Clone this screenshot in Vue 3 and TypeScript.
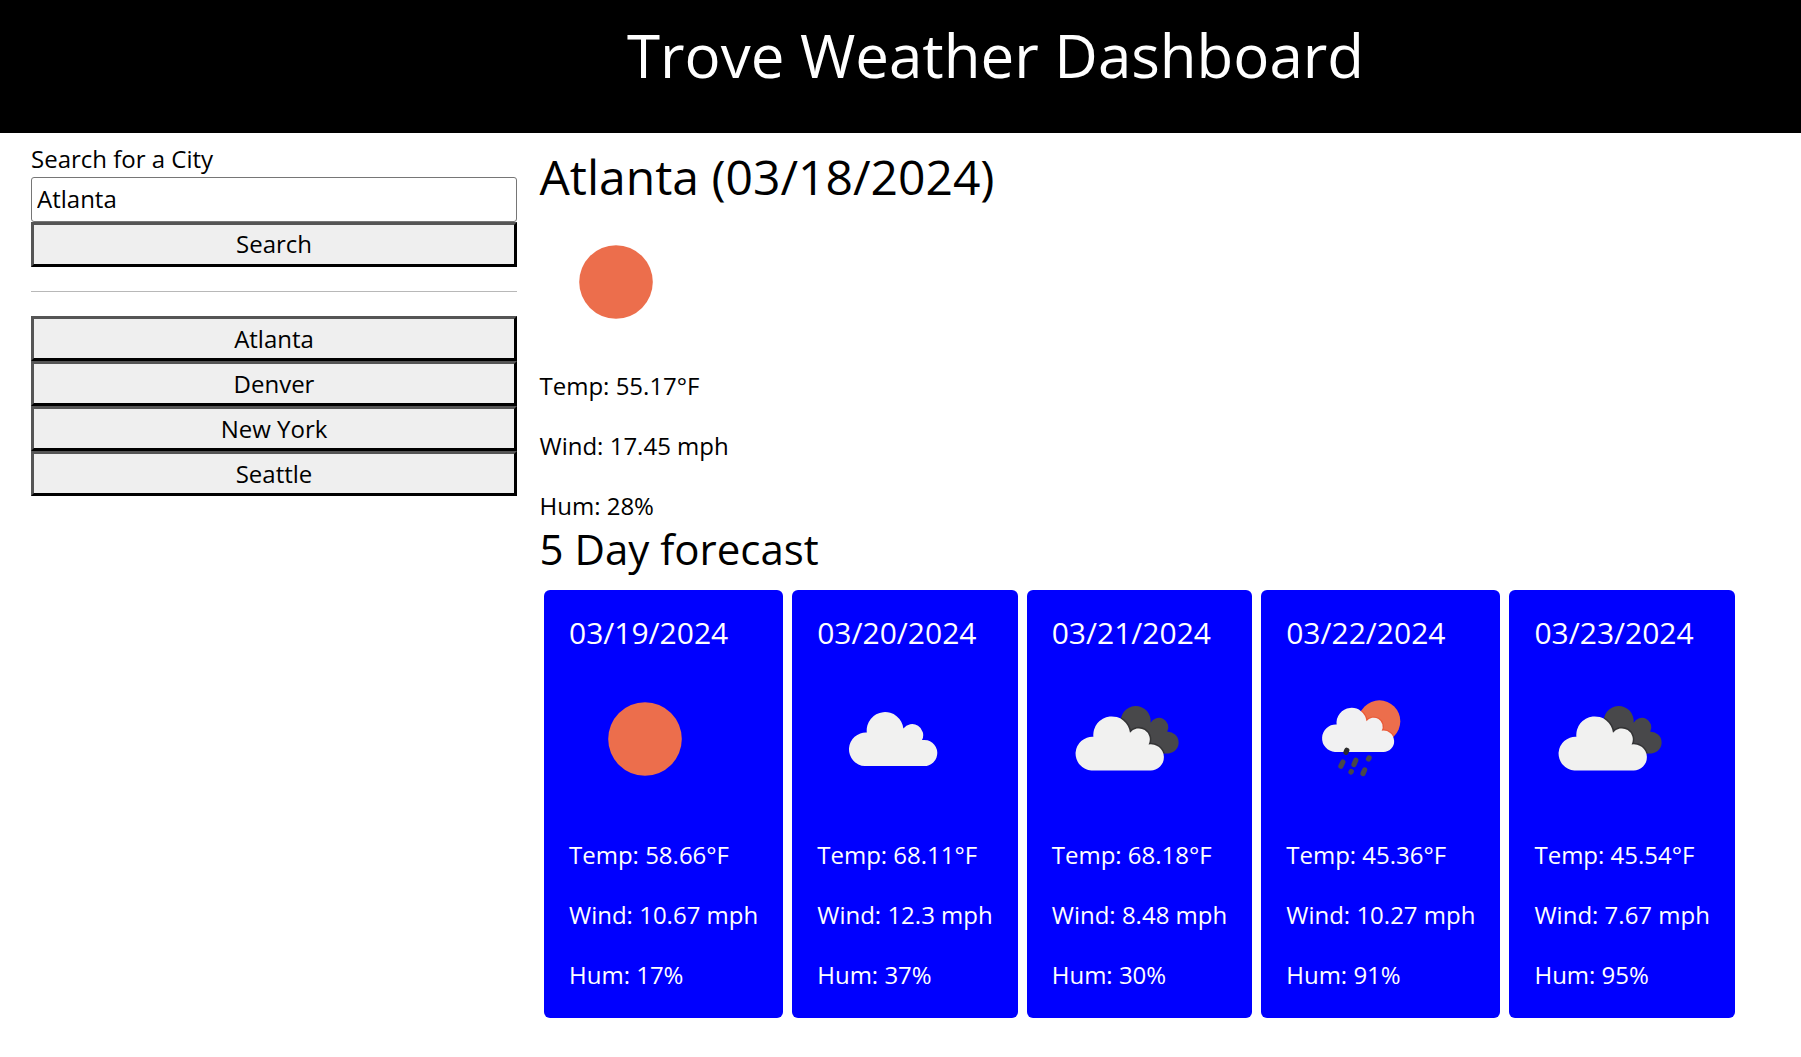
<script setup lang="ts">
import { ref } from 'vue'

type Icon = 'sun' | 'cloud' | 'broken' | 'rain'

interface Day {
  date: string
  icon: Icon
  temp: string
  wind: string
  hum: string
}

const query = ref('Atlanta')
const cities: string[] = ['Atlanta', 'Denver', 'New York', 'Seattle']

const cloud =
  'M47.8 102.4A16.8 16.8 0 1 1 49.8 68.8A18.4 18.4 0 1 1 86.4 64.8A11 11 0 0 1 105 76.4A13.1 13.1 0 1 1 106.5 102.4Z'
const darkCloud =
  'M61 89.4L69 60A15 15 0 1 1 98.6 58.8A9.4 9.4 0 0 1 115.2 67.8A10.8 10.8 0 1 1 116.4 89.4Z'

const days: Day[] = [
  { date: '03/19/2024', icon: 'sun', temp: '58.66', wind: '10.67', hum: '17' },
  { date: '03/20/2024', icon: 'cloud', temp: '68.11', wind: '12.3', hum: '37' },
  { date: '03/21/2024', icon: 'broken', temp: '68.18', wind: '8.48', hum: '30' },
  { date: '03/22/2024', icon: 'rain', temp: '45.36', wind: '10.27', hum: '91' },
  { date: '03/23/2024', icon: 'broken', temp: '45.54', wind: '7.67', hum: '95' },
]
</script>

<template>
  <div class="page">
    <header class="header"><h1>Trove Weather Dashboard</h1></header>
    <div class="layout">
      <aside class="sidebar">
        <label for="city">Search for a City</label>
        <input id="city" v-model="query" type="text" />
        <button class="search" type="button">Search</button>
        <hr />
        <button v-for="city in cities" :key="city" type="button">{{ city }}</button>
      </aside>
      <main class="main">
        <h2>Atlanta (03/18/2024)</h2>
        <svg class="icon" viewBox="0 0 150 150"><circle cx="75" cy="75" r="36.8" fill="#ec6e4c" /></svg>
        <p>Temp: 55.17°F</p>
        <p>Wind: 17.45 mph</p>
        <p class="last">Hum: 28%</p>
        <h3>5 Day forecast</h3>
        <div class="cards">
          <section v-for="(day, i) in days" :key="day.date" class="card">
            <h4>{{ day.date }}</h4>
            <svg class="icon" viewBox="0 0 150 150">
              <circle v-if="day.icon === 'sun'" cx="75" cy="75" r="36.8" fill="#ec6e4c" />
              <path v-else-if="day.icon === 'cloud'" :d="cloud" transform="translate(-1 -.3)" fill="#f1f1f0" />
              <template v-else-if="day.icon === 'broken'">
                <clipPath :id="'dark' + i"><path :d="darkCloud" /></clipPath>
                <path :d="darkCloud" fill="#48484a" />
                <g :clip-path="`url(#dark${i})`">
                  <path :d="cloud" transform="translate(-8.4 4)" fill="none" stroke="#2c2c2d" stroke-width="3" stroke-opacity=".7" />
                </g>
                <path :d="cloud" transform="translate(-8.4 4)" fill="#f1f1f0" />
              </template>
              <template v-else>
                <clipPath :id="'sun' + i"><circle cx="92.4" cy="57.2" r="20.9" /></clipPath>
                <circle cx="92.4" cy="57.2" r="20.9" fill="#ec6e4c" />
                <g :clip-path="`url(#sun${i})`">
                  <path :d="cloud" transform="translate(9 4.4) scale(.816)" fill="none" stroke="#ea5a38" stroke-width="3" />
                </g>
                <path :d="cloud" transform="translate(9 4.4) scale(.816)" fill="#f1f1f2" />
                <g stroke="#48484a" stroke-width="5.2" stroke-linecap="round">
                  <path d="M59.8 86.3L59 88.3" stroke="#2c2c2d" />
                  <path d="M55.9 98L53.9 102.2" />
                  <path d="M68.8 96.2L67 100.6" />
                  <path d="M82.1 93.9L81.5 95" />
                  <path d="M64.3 107.5L64 108" />
                  <path d="M77.6 106L76 109.6" />
                </g>
              </template>
            </svg>
            <p>Temp: {{ day.temp }}°F</p>
            <p>Wind: {{ day.wind }} mph</p>
            <p class="last">Hum: {{ day.hum }}%</p>
          </section>
        </div>
      </main>
    </div>
  </div>
</template>

<style>
body {
  margin: 0;
  background: #fff;
}
</style>

<style scoped>
.page {
  font-family: 'Open Sans', sans-serif;
  font-size: 24px;
  line-height: 36px;
  color: #000;
}
h1,
h2,
h3,
h4,
p {
  margin: 0;
  font-weight: 400;
}
.header {
  box-sizing: border-box;
  height: 133px;
  padding: 19px 0 0 190px;
  background: #000;
  color: #fff;
  text-align: center;
}
h1 {
  font-size: 60px;
  line-height: 72px;
}
.layout {
  display: flex;
}
.sidebar {
  display: flex;
  flex-direction: column;
  width: 486px;
  margin-left: 31px;
  padding-top: 8px;
}
label {
  height: 36px;
}
input,
button {
  box-sizing: border-box;
  width: 100%;
  height: 45px;
  margin: 0;
  font: inherit;
  line-height: 33px;
  color: #000;
}
input {
  padding: 0 5px 2px;
  border: 1px solid #767676;
  border-radius: 3px;
  background: #fff;
  outline: none;
}
button {
  padding: 0;
  border: 3px solid;
  border-color: #555 #000 #000 #555;
  border-radius: 0;
  background: #efefef;
}
.search {
  padding-bottom: 2px;
}
hr {
  width: 100%;
  height: 1px;
  margin: 24px 0;
  border: 0;
  background: #b8b8b8;
}
.main {
  padding: 15px 0 0 22.5px;
}
h2 {
  font-size: 48px;
  line-height: 58px;
}
.icon {
  display: block;
  width: 150px;
  height: 150px;
}
.main > .icon {
  margin: 1px 0 11px 1px;
}
p {
  margin-bottom: 24px;
}
p.last {
  margin-bottom: 0;
}
h3 {
  font-size: 42px;
  line-height: 50px;
  margin-bottom: 16px;
}
.cards {
  display: flex;
  gap: 9px;
  padding-left: 4.5px;
}
.card {
  box-sizing: border-box;
  height: 428px;
  padding: 24.5px 25px;
  border-radius: 6px;
  background: #00f;
  color: #fff;
  white-space: nowrap;
}
h4 {
  font-size: 30px;
  line-height: 36px;
}
.card .icon {
  margin: 13px 0 23px 0.5px;
}
</style>
